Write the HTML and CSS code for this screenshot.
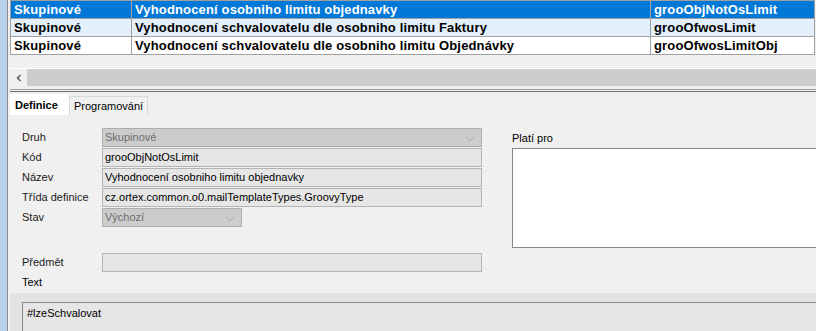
FILE: index.html
```html
<!DOCTYPE html>
<html lang="cs">
<head>
    <meta charset="UTF-8">
    <title>Šablony</title>
    <link rel="stylesheet" href="styles.css">
</head>
<body>
    <div class="window">
        <div class="side"></div>
        <div class="main">
            <table class="grid">
                <colgroup>
                    <col class="c1"><col class="c2"><col class="c3">
                </colgroup>
                <tr class="selected">
                    <td>Skupinové</td>
                    <td>Vyhodnocení osobniho limitu objednavky</td>
                    <td>grooObjNotOsLimit</td>
                </tr>
                <tr class="alt">
                    <td>Skupinové</td>
                    <td>Vyhodnocení schvalovatelu dle osobniho limitu Faktury</td>
                    <td>grooOfwosLimit</td>
                </tr>
                <tr>
                    <td>Skupinové</td>
                    <td>Vyhodnocení schvalovatelu dle osobniho limitu Objednávky</td>
                    <td>grooOfwosLimitObj</td>
                </tr>
            </table>

            <div class="hscroll">
                <div class="arrow">
                    <svg width="8" height="8" viewBox="0 0 8 8"><polyline points="5.5,1 2.5,4 5.5,7" fill="none" stroke="#606060" stroke-width="1.6"/></svg>
                </div>
                <div class="thumb"></div>
            </div>
            <div class="split"></div>

            <div class="tabs">
                <div class="tab active">Definice</div>
                <div class="tab">Programování</div>
            </div>

            <div class="panel">
                <div class="top">
                    <div class="form">
                        <label>Druh</label>
                        <div class="field select disabled">Skupinové
                            <svg class="chev" width="10" height="6" viewBox="0 0 10 6"><polyline points="1,1 5,5 9,1" fill="none" stroke="#a8a8a8" stroke-width="1"/></svg>
                        </div>
                        <label>Kód</label>
                        <div class="field">grooObjNotOsLimit</div>
                        <label>Název</label>
                        <div class="field">Vyhodnocení osobniho limitu objednavky</div>
                        <label>Třída definice</label>
                        <div class="field">cz.ortex.common.o0.mailTemplateTypes.GroovyType</div>
                        <label>Stav</label>
                        <div class="field select disabled short">Výchozí
                            <svg class="chev" width="10" height="6" viewBox="0 0 10 6"><polyline points="1,1 5,5 9,1" fill="none" stroke="#a8a8a8" stroke-width="1"/></svg>
                        </div>
                    </div>
                    <div class="plati">
                        <div class="plati-label">Platí pro</div>
                        <div class="plati-box"></div>
                    </div>
                </div>

                <div class="form subject">
                    <label>Předmět</label>
                    <div class="field"></div>
                </div>
                <div class="text-label">Text</div>

                <div class="editor">
                    <div class="area">#lzeSchvalovat</div>
                </div>
            </div>
        </div>
    </div>
</body>
</html>
```

FILE: styles.css
```css
body {
    margin: 0;
    background: #f0f0f0;
    font-family: "Liberation Sans", Arial, sans-serif;
    font-size: 11px;
    color: #000;
}
.window {
    display: flex;
    width: 816px;
    height: 331px;
    overflow: hidden;
}
.side {
    width: 7px;
    flex: none;
    background: #b9d1ea;
    border-right: 1px solid #8f8f8f;
    margin-right: 2px;
}
.main {
    flex: 1;
    min-width: 0;
}

/* grid */
.grid {
    border-collapse: collapse;
    width: 804px;
    table-layout: fixed;
    font-size: 13px;
    font-weight: bold;
    letter-spacing: 0.15px;
}
.c1 { width: 121px; }
.c2 { width: 519px; }
.c3 { width: 164px; }
.grid td {
    height: 17px;
    line-height: 17px;
    padding: 0 3px;
    border: 1px solid #a0a0a0;
    background: #fff;
    white-space: nowrap;
    overflow: hidden;
}
.grid tr.alt td { background: #e3f0fc; }
.grid tr.selected td {
    background: #0078d7;
    color: #fff;
}

.hscroll {
    display: flex;
    height: 17px;
    margin-top: 13px;
    border-top: 1px solid #fff;
}
.hscroll .arrow {
    width: 17px;
    display: flex;
    align-items: center;
    justify-content: center;
}
.hscroll .thumb {
    flex: 1;
    background: #cdcdcd;
}
.split {
    height: 1px;
    margin-top: 3px;
    border-top: 1px solid #a0a0a0;
    border-bottom: 1px solid #6f6f6f;
}

/* tabs */
.tabs {
    display: flex;
    align-items: flex-end;
    height: 20px;
    padding-top: 3px;
}
.tab {
    height: 18px;
    line-height: 18px;
    padding: 0 4px;
    border: 1px solid #d9d9d9;
    border-bottom: none;
    background: #f0f0f0;
}
.tab.active {
    height: 20px;
    line-height: 20px;
    width: 49px;
    background: #fff;
    font-weight: bold;
    border-color: #fff;
}

/* panel */
.panel {
    padding-top: 13px;
}
.top {
    display: flex;
}
.form {
    display: grid;
    grid-template-columns: 80px 380px;
    grid-auto-rows: 19px;
    row-gap: 1px;
    padding-left: 12px;
}
.form label {
    line-height: 19px;
    color: #1a1a1a;
}
.field {
    position: relative;
    box-sizing: border-box;
    height: 19px;
    line-height: 17px;
    padding: 0 2px;
    background: #e6e6e6;
    border: 1px solid #b4b4b4;
    white-space: nowrap;
    overflow: hidden;
}
.field.disabled {
    background: #cccccc;
    border-color: #adadad;
    color: #6d6d6d;
}
.field.short { width: 140px; }
.chev {
    position: absolute;
    right: 6px;
    top: 7px;
}
.plati {
    flex: 1;
    margin-left: 30px;
}
.plati-label {
    height: 20px;
    line-height: 20px;
}
.plati-box {
    height: 98px;
    background: #fff;
    border: 1px solid #828790;
    border-right: none;
}
.subject {
    margin-top: 5px;
}
.text-label {
    padding-left: 12px;
    height: 21px;
    line-height: 21px;
}
.editor {
    background: #e3e3e3;
    padding: 9px 0 0 12px;
    height: 40px;
}
.area {
    height: 100%;
    border-top: 1px solid #8a8a9a;
    border-left: 1px solid #8a8a9a;
    background: #e6e6e6;
    padding: 3px 4px;
    line-height: 14px;
}
```
